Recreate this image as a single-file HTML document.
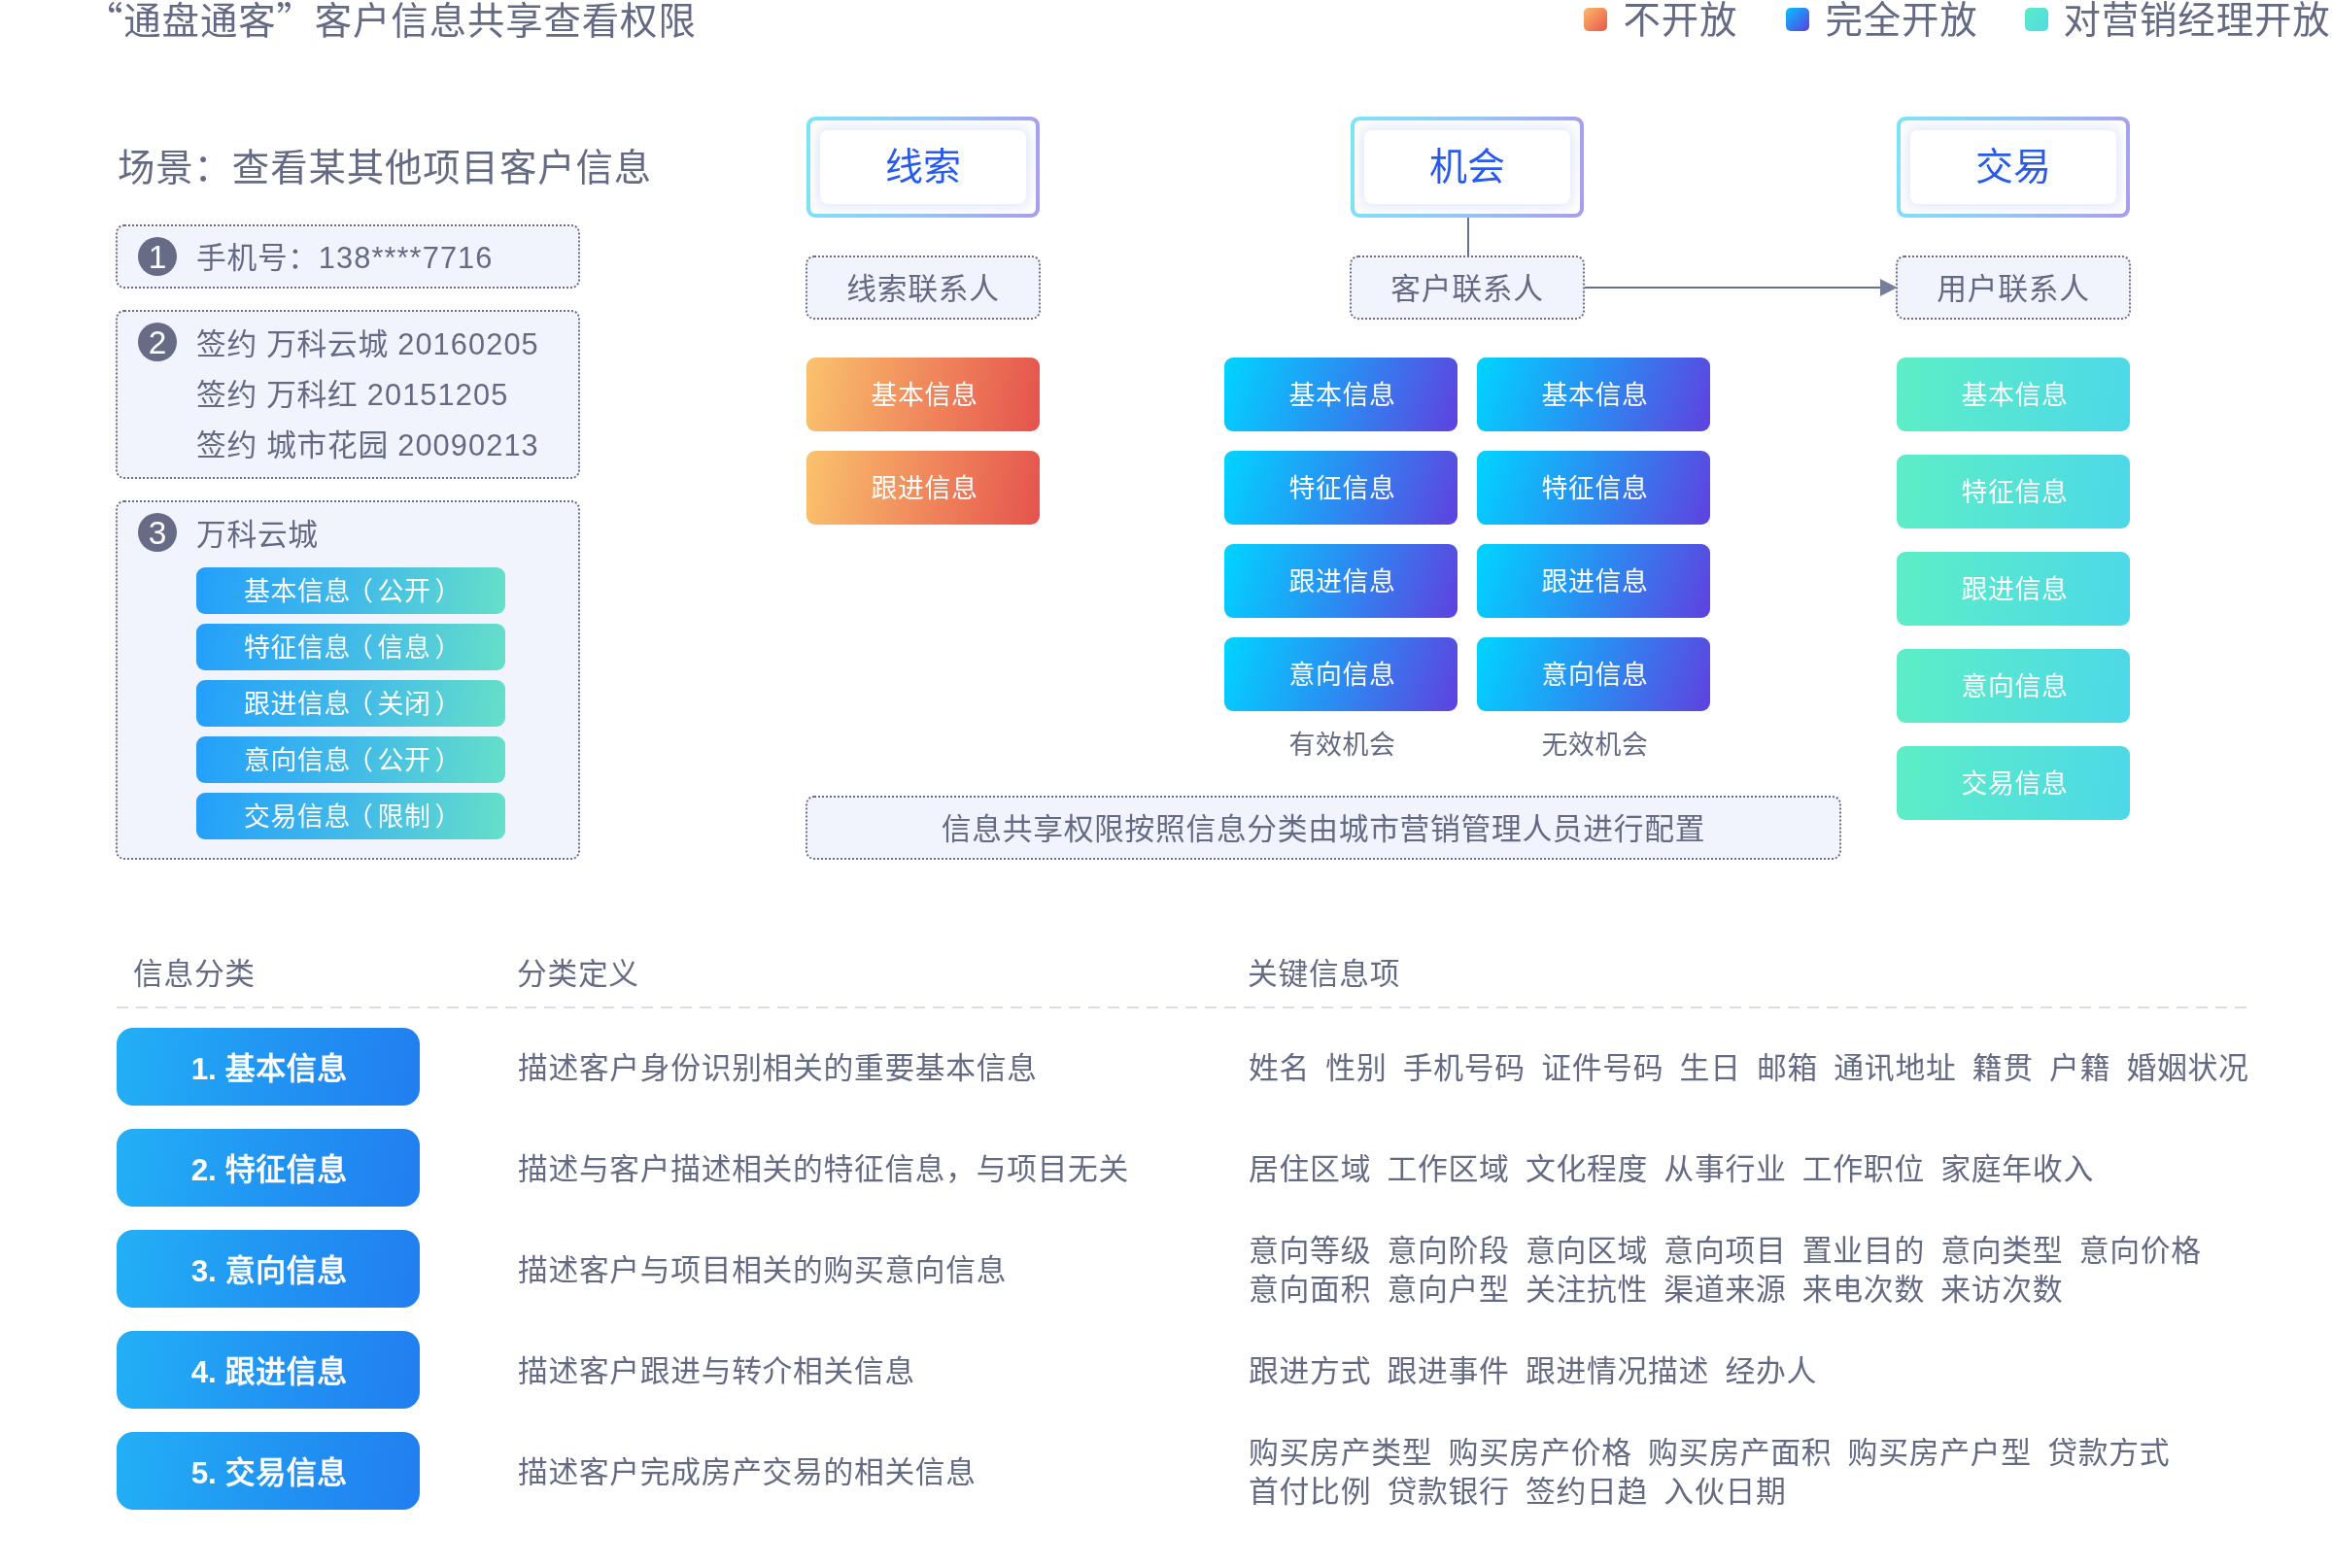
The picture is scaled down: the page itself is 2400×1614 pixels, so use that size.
<!DOCTYPE html>
<html lang="zh-CN">
<head>
<meta charset="utf-8">
<title>通盘通客 客户信息共享查看权限</title>
<style>
html,body{margin:0;padding:0;background:#fff;}
body{width:2400px;height:1614px;position:relative;overflow:hidden;
  font-family:"Liberation Sans","Noto Sans CJK SC",sans-serif;color:#646a83;}
.a{position:absolute;white-space:nowrap;}
.q{font-family:"Noto Sans CJK SC","Liberation Sans",sans-serif;}
#root{position:absolute;left:0;top:0;width:2400px;height:1614px;will-change:transform;}
#bg{position:absolute;left:0;top:0;width:2400px;height:1614px;}
.t39{font-size:38.4px;letter-spacing:.9px;line-height:48px;height:48px;margin-top:1.5px;}
.t31{font-size:30.75px;letter-spacing:.7px;line-height:40px;height:40px;margin-top:2px;}
.t27{font-size:26.9px;letter-spacing:.6px;line-height:36px;height:36px;margin-top:1.5px;padding-left:3px;box-sizing:border-box;}
.c{text-align:center;}
/* gradient buttons */
.btn{position:absolute;height:76px;width:240px;border-radius:9px;color:#fff;text-align:center;
  font-size:26.9px;letter-spacing:.6px;line-height:79px;white-space:nowrap;overflow:hidden;padding-left:3px;box-sizing:border-box;}
.or{background:linear-gradient(100deg,#fac36d 0%,#f0895c 50%,#e5534d 100%);}
.bl{background:linear-gradient(108deg,#00d5ff 0%,#2a8df2 50%,#5f41df 100%);}
.tl{background:linear-gradient(95deg,#5deec6 0%,#4dd8e8 100%);}
.pill{position:absolute;left:202px;width:318px;height:48px;border-radius:9px;color:#fff;text-align:center;
  font-size:26.9px;letter-spacing:.6px;line-height:51.5px;white-space:nowrap;overflow:hidden;
  background:linear-gradient(98deg,#239ffb 0%,#45bde6 55%,#66dfc9 100%);}
.tb{position:absolute;left:120px;width:312px;height:80px;border-radius:17px;color:#fff;text-align:center;
  font-size:31.45px;line-height:85px;font-weight:500;-webkit-text-stroke:0.35px #fff;white-space:nowrap;overflow:hidden;padding-left:2px;box-sizing:border-box;
  background:linear-gradient(100deg,#22b0f6 0%,#2190f2 60%,#217ef0 100%);}
/* stage boxes */
.stage{position:absolute;top:120px;width:240px;height:103.5px;border-radius:9px;
  background:linear-gradient(100deg,#7be5f8 0%,#93c6f6 50%,#a99cee 100%);}
.stage i{position:absolute;left:3.75px;top:3.75px;right:3.75px;bottom:3.75px;border-radius:5.5px;background:#fdfdff;}
.stage b{position:absolute;left:14px;top:14px;right:14px;bottom:14px;border-radius:8px;background:#fff;
  box-shadow:0 0 11px 3px rgba(208,216,246,.55);font-weight:normal;color:#2a5be8;font-size:39px;line-height:75px;text-align:center;}
.num{position:absolute;width:40px;height:40px;border-radius:50%;background:#666c85;color:#fff;
  font-size:33.5px;line-height:42px;text-align:center;overflow:hidden;}
.lg{position:absolute;top:8px;width:24px;height:24px;border-radius:5px;}
.tb b{-webkit-text-stroke:0;}
.kw{word-spacing:7px;font-size:30.85px;margin-top:2.2px;}
.dg{letter-spacing:1.1px;}
.pl{position:relative;left:-4px;}
.pr{position:relative;left:4px;}
</style>
</head>
<body>
<div id="root">
<svg id="bg" width="2400" height="1614" viewBox="0 0 2400 1614">
  <g fill="#f1f4fc" stroke="#696f8b" stroke-width="2" stroke-dasharray="2 2">
    <rect x="120" y="232" width="476" height="64" rx="8"/>
    <rect x="120" y="320" width="476" height="172" rx="8"/>
    <rect x="120" y="516" width="476" height="368" rx="8"/>
    <rect x="830" y="264" width="240" height="64" rx="8"/>
    <rect x="1390" y="264" width="240" height="64" rx="8"/>
    <rect x="1952" y="264" width="240" height="64" rx="8"/>
    <rect x="830" y="820" width="1064" height="64" rx="8"/>
  </g>
  <rect x="1510" y="223" width="2" height="40" fill="#6a7190"/>
  <rect x="1631" y="295" width="306" height="2" fill="#6a7190"/>
  <path d="M1935 287 L1952.5 296 L1935 305 Z" fill="#767e9b"/>
  <line x1="120" y1="1037" x2="2312" y2="1037" stroke="#cdd3e6" stroke-width="1.5" stroke-dasharray="12 8"/>
</svg>

<!-- header -->
<div class="a t39" style="left:88px;top:-8px;"><span class="q">“</span>通盘通客<span class="q">”</span>客户信息共享查看权限</div>
<div class="lg" style="left:1630px;background:linear-gradient(135deg,#fdbb6a,#e6564b);"></div>
<div class="a t39" style="left:1670.5px;top:-4.5px;">不开放</div>
<div class="lg" style="left:1838px;background:linear-gradient(135deg,#05c3ff,#5a3fe0);"></div>
<div class="a t39" style="left:1878.5px;top:-4.5px;">完全开放</div>
<div class="lg" style="left:2084px;background:linear-gradient(135deg,#5ceac9,#4fdce2);"></div>
<div class="a t39" style="left:2123.5px;top:-4.5px;">对营销经理开放</div>

<!-- scenario -->
<div class="a t39" style="left:121px;top:147px;">场景：查看某其他项目客户信息</div>

<!-- left panel -->
<div class="num" style="left:142px;top:244px;">1</div>
<div class="a t31" style="left:202px;top:244px;">手机号：<span class="dg">138****7716</span></div>
<div class="num" style="left:142px;top:332px;">2</div>
<div class="a t31" style="left:202px;top:333px;">签约 万科云城 <span class="dg">20160205</span></div>
<div class="a t31" style="left:202px;top:385px;">签约 万科红 <span class="dg">20151205</span></div>
<div class="a t31" style="left:202px;top:437px;">签约 城市花园 <span class="dg">20090213</span></div>
<div class="num" style="left:142px;top:528px;">3</div>
<div class="a t31" style="left:202px;top:529px;">万科云城</div>
<div class="pill" style="top:584px;">基本信息<span class="pl">（</span>公开<span class="pr">）</span></div>
<div class="pill" style="top:642px;">特征信息<span class="pl">（</span>信息<span class="pr">）</span></div>
<div class="pill" style="top:700px;">跟进信息<span class="pl">（</span>关闭<span class="pr">）</span></div>
<div class="pill" style="top:758px;">意向信息<span class="pl">（</span>公开<span class="pr">）</span></div>
<div class="pill" style="top:816px;">交易信息<span class="pl">（</span>限制<span class="pr">）</span></div>

<!-- stages -->
<div class="stage" style="left:830px;"><i></i><b>线索</b></div>
<div class="stage" style="left:1390px;"><i></i><b>机会</b></div>
<div class="stage" style="left:1952px;"><i></i><b>交易</b></div>
<div class="a t31 c" style="left:830px;width:240px;top:276px;">线索联系人</div>
<div class="a t31 c" style="left:1390px;width:240px;top:276px;">客户联系人</div>
<div class="a t31 c" style="left:1952px;width:240px;top:276px;">用户联系人</div>

<div class="btn or" style="left:830px;top:368px;">基本信息</div>
<div class="btn or" style="left:830px;top:464px;">跟进信息</div>

<div class="btn bl" style="left:1260px;top:368px;">基本信息</div>
<div class="btn bl" style="left:1260px;top:464px;">特征信息</div>
<div class="btn bl" style="left:1260px;top:560px;">跟进信息</div>
<div class="btn bl" style="left:1260px;top:656px;">意向信息</div>
<div class="btn bl" style="left:1520px;top:368px;">基本信息</div>
<div class="btn bl" style="left:1520px;top:464px;">特征信息</div>
<div class="btn bl" style="left:1520px;top:560px;">跟进信息</div>
<div class="btn bl" style="left:1520px;top:656px;">意向信息</div>
<div class="a t27 c" style="left:1260px;width:240px;top:747px;">有效机会</div>
<div class="a t27 c" style="left:1520px;width:240px;top:747px;">无效机会</div>

<div class="btn tl" style="left:1952px;top:368px;">基本信息</div>
<div class="btn tl" style="left:1952px;top:468px;">特征信息</div>
<div class="btn tl" style="left:1952px;top:568px;">跟进信息</div>
<div class="btn tl" style="left:1952px;top:668px;">意向信息</div>
<div class="btn tl" style="left:1952px;top:768px;">交易信息</div>

<div class="a t31 c" style="left:830px;width:1064px;top:832px;">信息共享权限按照信息分类由城市营销管理人员进行配置</div>

<!-- table -->
<div class="a t31" style="left:137px;top:981px;">信息分类</div>
<div class="a t31" style="left:532px;top:981px;">分类定义</div>
<div class="a t31" style="left:1284px;top:981px;">关键信息项</div>

<div class="tb" style="top:1058px;"><b>1.</b> 基本信息</div>
<div class="tb" style="top:1162px;"><b>2.</b> 特征信息</div>
<div class="tb" style="top:1266px;"><b>3.</b> 意向信息</div>
<div class="tb" style="top:1370px;"><b>4.</b> 跟进信息</div>
<div class="tb" style="top:1474px;"><b>5.</b> 交易信息</div>

<div class="a t31" style="left:533px;top:1078px;">描述客户身份识别相关的重要基本信息</div>
<div class="a t31" style="left:533px;top:1182px;">描述与客户描述相关的特征信息，与项目无关</div>
<div class="a t31" style="left:533px;top:1286px;">描述客户与项目相关的购买意向信息</div>
<div class="a t31" style="left:533px;top:1390px;">描述客户跟进与转介相关信息</div>
<div class="a t31" style="left:533px;top:1494px;">描述客户完成房产交易的相关信息</div>

<div class="a t31 kw" style="left:1285px;top:1078px;">姓名 性别 手机号码 证件号码 生日 邮箱 通讯地址 籍贯 户籍 婚姻状况</div>
<div class="a t31 kw" style="left:1285px;top:1182px;">居住区域 工作区域 文化程度 从事行业 工作职位 家庭年收入</div>
<div class="a t31 kw" style="left:1285px;top:1266.3px;">意向等级 意向阶段 意向区域 意向项目 置业目的 意向类型 意向价格</div>
<div class="a t31 kw" style="left:1285px;top:1306px;">意向面积 意向户型 关注抗性 渠道来源 来电次数 来访次数</div>
<div class="a t31 kw" style="left:1285px;top:1390px;">跟进方式 跟进事件 跟进情况描述 经办人</div>
<div class="a t31 kw" style="left:1285px;top:1474px;">购买房产类型 购买房产价格 购买房产面积 购买房产户型 贷款方式</div>
<div class="a t31 kw" style="left:1285px;top:1514px;">首付比例 贷款银行 签约日趋 入伙日期</div>

</div>
</body>
</html>
